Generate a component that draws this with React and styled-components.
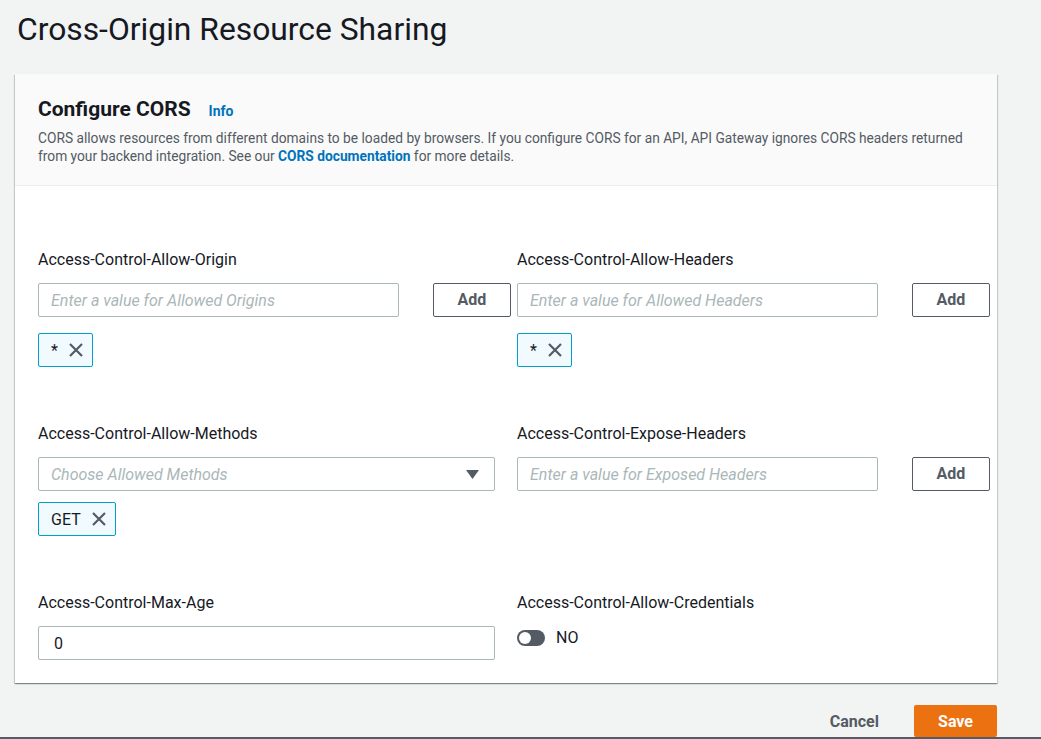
import React from 'react'
import styled, { createGlobalStyle } from 'styled-components'

const GlobalStyle = createGlobalStyle`
  html, body {
    margin: 0;
    padding: 0;
    background: #f2f3f3;
    font-family: Roboto, "Liberation Sans", sans-serif;
    color: #16191f;
  }
`

const CloseIcon = () => (
  <svg width="16" height="16" viewBox="0 0 16 16">
    <path d="M2 2 L14 14 M14 2 L2 14" stroke="#545b64" strokeWidth="2.2" fill="none" />
  </svg>
)

const Caret = () => (
  <svg width="13" height="9" viewBox="0 0 13 9">
    <path d="M0 0 H13 L6.5 9 Z" fill="#545b64" />
  </svg>
)

const TokenInputField = ({ label, placeholder, tokens }) => (
  <Field>
    <Label>{label}</Label>
    <InputRow>
      <Input placeholder={placeholder} />
      <AddButton>Add</AddButton>
    </InputRow>
    {tokens && (
      <Tokens $gap={16}>
        {tokens.map(t => (
          <Token key={t}>
            <span>{t}</span>
            <CloseIcon />
          </Token>
        ))}
      </Tokens>
    )}
  </Field>
)

const App = () => {
  return (
    <Page>
      <GlobalStyle />
      <Title>Cross-Origin Resource Sharing</Title>
      <Card>
        <CardHeader>
          <HeaderTitle>
            <h2>Configure CORS</h2>
            <InfoLink>Info</InfoLink>
          </HeaderTitle>
          <Description>
            CORS allows resources from different domains to be loaded by browsers. If you configure CORS for an API, API Gateway ignores CORS headers returned
            <br />
            from your backend integration. See our <strong>CORS documentation</strong> for more details.
          </Description>
        </CardHeader>
        <CardBody>
          <TokenInputField
            label="Access-Control-Allow-Origin"
            placeholder="Enter a value for Allowed Origins"
            tokens={['*']}
          />
          <TokenInputField
            label="Access-Control-Allow-Headers"
            placeholder="Enter a value for Allowed Headers"
            tokens={['*']}
          />

          <Field>
            <Label>Access-Control-Allow-Methods</Label>
            <Select>
              <span>Choose Allowed Methods</span>
              <Caret />
            </Select>
            <Tokens $gap={11}>
              <Token>
                <span>GET</span>
                <CloseIcon />
              </Token>
            </Tokens>
          </Field>
          <TokenInputField
            label="Access-Control-Expose-Headers"
            placeholder="Enter a value for Exposed Headers"
          />

          <Field>
            <Label>Access-Control-Max-Age</Label>
            <WideInput defaultValue="0" />
          </Field>
          <Field>
            <Label>Access-Control-Allow-Credentials</Label>
            <ToggleRow>
              <Toggle />
              <span>NO</span>
            </ToggleRow>
          </Field>
        </CardBody>
      </Card>
      <Actions>
        <CancelButton>Cancel</CancelButton>
        <SaveButton>Save</SaveButton>
      </Actions>
      <BottomBar />
    </Page>
  )
}

export default App

const Page = styled.div`
  width: 1041px;
  height: 739px;
  overflow: hidden;
  padding-left: 15px;
  box-sizing: border-box;
`

const Title = styled.h1`
  margin: 0;
  padding: 10px 0 0 2px;
  height: 63px;
  box-sizing: border-box;
  font-size: 31.8px;
  font-weight: 400;
  line-height: 38px;
  color: #16191f;
`

const Card = styled.div`
  width: 982px;
  margin-top: 11px;
  background: #fff;
  box-shadow: 0 1px 1px 0 rgba(0, 28, 36, 0.3), 1px 1px 1px 0 rgba(0, 28, 36, 0.15), -1px 1px 1px 0 rgba(0, 28, 36, 0.15);
`

const CardHeader = styled.div`
  background: #fafafa;
  border-bottom: 1px solid #eaeded;
  padding: 22px 22px 0 23px;
  height: 112px;
  box-sizing: border-box;
`

const HeaderTitle = styled.div`
  display: flex;
  align-items: baseline;
  gap: 18px;

  h2 {
    margin: 0;
    font-size: 21px;
    font-weight: 700;
    line-height: 26px;
    color: #16191f;
  }
`

const InfoLink = styled.span`
  font-size: 14px;
  font-weight: 700;
  color: #0073bb;
`

const Description = styled.p`
  margin: 7px 0 0;
  font-size: 13.75px;
  line-height: 18px;
  color: #545b64;
  white-space: nowrap;

  strong {
    color: #0073bb;
    font-weight: 700;
  }
`

const CardBody = styled.div`
  display: grid;
  grid-template-columns: 473px 473px;
  column-gap: 6px;
  row-gap: 57px;
  padding: 64px 7px 23px 23px;
`

const Field = styled.div`
  display: flex;
  flex-direction: column;
`

const Label = styled.div`
  font-size: 16px;
  line-height: 20px;
  color: #16191f;
  margin-bottom: 13px;
`

const InputRow = styled.div`
  display: flex;
  justify-content: space-between;
`

const Input = styled.input`
  width: 361px;
  height: 34px;
  box-sizing: border-box;
  border: 1px solid #aab7b8;
  border-radius: 2px;
  padding: 0 12px;
  font-family: Roboto, "Liberation Sans", sans-serif;
  font-size: 16px;
  color: #16191f;
  outline: none;

  &::placeholder {
    color: #aab7b8;
    font-style: italic;
  }
`

const WideInput = styled(Input)`
  width: 457px;
  padding-left: 15px;
`

const AddButton = styled.button`
  width: 78px;
  height: 34px;
  box-sizing: border-box;
  background: #fff;
  border: 1px solid #545b64;
  border-radius: 2px;
  font-family: Roboto, "Liberation Sans", sans-serif;
  font-size: 16px;
  font-weight: 700;
  color: #545b64;
  padding: 0 0 2px;
`

const Select = styled.div`
  width: 457px;
  height: 34px;
  box-sizing: border-box;
  border: 1px solid #aab7b8;
  border-radius: 2px;
  background: #fff;
  display: flex;
  align-items: center;
  justify-content: space-between;
  padding: 0 15px 0 12px;

  span {
    font-size: 16px;
    font-style: italic;
    color: #aab7b8;
  }
`

const Tokens = styled.div`
  display: flex;
  gap: 8px;
  margin-top: ${p => p.$gap}px;
`

const Token = styled.div`
  display: flex;
  align-items: center;
  gap: 10px;
  height: 34px;
  box-sizing: border-box;
  padding: 0 8px 0 12px;
  background: #f1faff;
  border: 1px solid #00a1c9;
  border-radius: 2px;
  font-size: 16px;
  color: #16191f;
`

const ToggleRow = styled.div`
  display: flex;
  align-items: center;
  gap: 11px;
  margin-top: 2px;
  font-size: 16px;
  color: #16191f;
`

const Toggle = styled.div`
  position: relative;
  width: 28px;
  height: 16px;
  border-radius: 8px;
  background: #545b64;

  &::after {
    content: '';
    position: absolute;
    left: 2px;
    top: 2px;
    width: 12px;
    height: 12px;
    border-radius: 50%;
    background: #fff;
  }
`

const Actions = styled.div`
  width: 982px;
  display: flex;
  justify-content: flex-end;
  align-items: center;
  gap: 35px;
  margin-top: 22px;
`

const CancelButton = styled.span`
  font-size: 16px;
  font-weight: 700;
  color: #545b64;
`

const SaveButton = styled.button`
  width: 83px;
  height: 32px;
  border: none;
  border-radius: 2px;
  background: #ec7211;
  color: #fff;
  font-family: Roboto, "Liberation Sans", sans-serif;
  font-size: 16px;
  font-weight: 700;
`

const BottomBar = styled.div`
  margin-left: -15px;
  width: 1041px;
  height: 2px;
  background: #545b64;
`
